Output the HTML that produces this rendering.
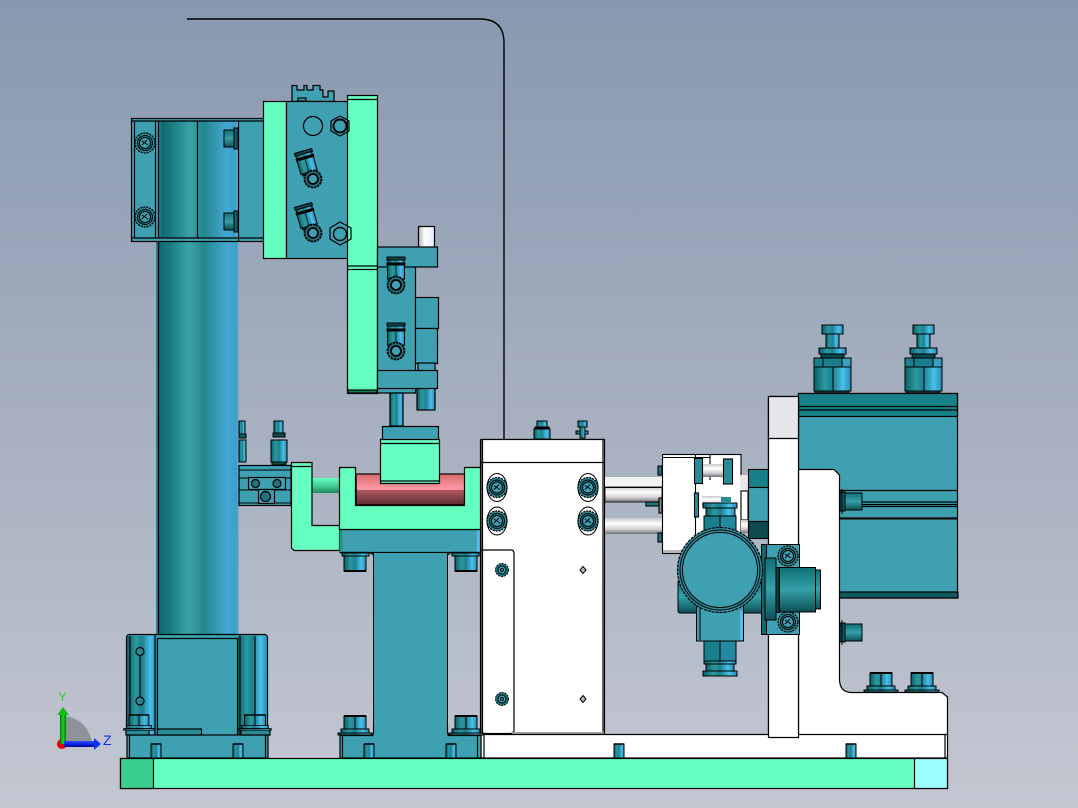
<!DOCTYPE html>
<html><head><meta charset="utf-8"><style>
html,body{margin:0;padding:0;width:1078px;height:808px;overflow:hidden;background:#a4aebd}
svg{display:block}
text{font-family:"Liberation Sans",sans-serif}
</style></head><body>
<svg width="1078" height="808" viewBox="0 0 1078 808" xmlns="http://www.w3.org/2000/svg">
<defs>
<linearGradient id="bg" x1="0" y1="0" x2="0" y2="1"><stop offset="0" stop-color="#8899af"/><stop offset=".5" stop-color="#a5afbf"/><stop offset="1" stop-color="#c4c7d2"/></linearGradient>
<linearGradient id="col" x1="0" y1="0" x2="1" y2="0"><stop offset="0" stop-color="#2f8f96"/><stop offset=".05" stop-color="#0f6a70"/><stop offset=".18" stop-color="#1a7d82"/><stop offset=".4" stop-color="#3aa3a8"/><stop offset=".58" stop-color="#24868e"/><stop offset=".85" stop-color="#43a8d2"/><stop offset=".97" stop-color="#3c9fca"/><stop offset="1" stop-color="#7bb0c6"/></linearGradient>
<linearGradient id="cyl" x1="0" y1="0" x2="1" y2="0"><stop offset="0" stop-color="#0d5f66"/><stop offset=".3" stop-color="#2c9aa0"/><stop offset=".5" stop-color="#1c7f90"/><stop offset=".78" stop-color="#4ac0ea"/><stop offset="1" stop-color="#2a88b0"/></linearGradient>
<linearGradient id="vc" x1="0" y1="0" x2="0" y2="1"><stop offset="0" stop-color="#0e6f74"/><stop offset=".5" stop-color="#35a0a8"/><stop offset="1" stop-color="#0c4f55"/></linearGradient>
<linearGradient id="rod" x1="0" y1="0" x2="0" y2="1"><stop offset="0" stop-color="#c8c8cc"/><stop offset=".35" stop-color="#fff"/><stop offset=".7" stop-color="#d0d0d4"/><stop offset="1" stop-color="#707074"/></linearGradient>
<linearGradient id="pin" x1="0" y1="0" x2="1" y2="0"><stop offset="0" stop-color="#b0b0b8"/><stop offset=".4" stop-color="#fff"/><stop offset="1" stop-color="#e8e8ff"/></linearGradient>
<linearGradient id="red" x1="0" y1="0" x2="0" y2="1"><stop offset="0" stop-color="#d96b6b"/><stop offset=".5" stop-color="#ff9aa8"/><stop offset=".52" stop-color="#b05a60"/><stop offset="1" stop-color="#5c2a30"/></linearGradient>
<linearGradient id="grod" x1="0" y1="0" x2="0" y2="1"><stop offset="0" stop-color="#66ffc2"/><stop offset=".5" stop-color="#45d094"/><stop offset="1" stop-color="#1f8a60"/></linearGradient>
<linearGradient id="ax" x1="0" y1="0" x2="1" y2="0"><stop offset="0" stop-color="#0a6a0a"/><stop offset=".5" stop-color="#10e010"/><stop offset="1" stop-color="#0a7a0a"/></linearGradient>
<linearGradient id="az" x1="0" y1="0" x2="0" y2="1"><stop offset="0" stop-color="#2a50ff"/><stop offset=".6" stop-color="#0a1ee0"/><stop offset="1" stop-color="#000a80"/></linearGradient>

<g id="bigbolt" stroke="#000" stroke-width="1">
<rect x="-10" y="0" width="21" height="9" fill="url(#cyl)"/>
<rect x="-6" y="9" width="13" height="14" fill="url(#cyl)"/>
<rect x="-13" y="23" width="27" height="6" fill="url(#cyl)"/>
<rect x="-11" y="29" width="23" height="4" fill="#0b4a50"/>
<rect x="-18" y="33" width="37" height="9" fill="#1a7f8c"/>
<path d="M-9 33v9M10 33v9" fill="none"/><rect x="10" y="33" width="9" height="9" fill="#3aa0c0"/>
<rect x="-18" y="42" width="37" height="24" fill="url(#cyl)"/>
<path d="M1 42v24" fill="none"/><rect x="-17" y="66" width="34" height="2" fill="#0b4a50"/>
</g>
<g id="footbolt" stroke="#000" stroke-width="1">
<rect x="-11" y="0" width="22" height="13" fill="url(#cyl)" stroke-width="1"/><path d="M-11 0h22" stroke-width="2"/>
<path d="M0 0v19" />
<rect x="-14" y="13" width="28" height="4" fill="url(#cyl)"/>
<rect x="-17" y="17" width="34" height="2" fill="url(#cyl)"/>
</g>
<g id="hexscrew">
<circle r="10" fill="#2a8b97" stroke="#000" stroke-width="1.3" stroke-dasharray="2 1"/>
<circle r="7.500" fill="#1c7580" stroke="#000" stroke-width="1"/>
<circle r="5.500" fill="#3fa0b2" stroke="#000" stroke-width="1"/>
<path d="M-3 -2L3 2M-3 2L2 -3" stroke="#000" stroke-width="1" fill="none"/>
</g>
<g id="wscrew">
<ellipse rx="10" ry="14" fill="#fff" stroke="#000" stroke-width="1"/>
<use href="#hexscrew"/>
</g>
<g id="ring" fill="none" stroke="#000">
<circle r="8.500" fill="#1c7580" stroke-width="1.800" stroke-dasharray="2.500 .8"/>
<circle r="5" fill="#3fa0b2" stroke-width="1.800"/>
</g>
<g id="ptfit" stroke="#000" stroke-width="1">
<rect x="-9" y="0" width="18" height="3" fill="#0b4a50"/>
<rect x="-8" y="3" width="16" height="3" fill="url(#cyl)"/>
<rect x="-9" y="6" width="18" height="2" fill="#000"/>
<rect x="-8.500" y="8" width="17" height="14" fill="url(#cyl)"/>
<path d="M0 8v14" stroke-width=".6"/>
<rect x="-7" y="22" width="14" height="2" fill="#0b4a50"/>
</g>
<g id="stud" stroke="#000" stroke-width="1">
<rect x="-5" y="0" width="10" height="14" fill="url(#cyl)"/>
<path d="M-5 0h10" stroke-width="1.500"/>
</g>
<g id="sidebolt" stroke="#000" stroke-width="1">
<rect x="0" y="3" width="5" height="19" fill="#0d5f66"/>
<rect x="5" y="4" width="17" height="17" fill="url(#vc)"/>
<path d="M2 0v25"/>
</g>
<g id="tinyscrew">
<circle r="6.500" fill="#1c7580" stroke="#000" stroke-width="1" stroke-dasharray="2 1"/>
<circle r="4" fill="#3fa0b2" stroke="#000" stroke-width="1"/>
<circle r="1.600" fill="#1c7580" stroke="#000" stroke-width=".7"/>
</g>
</defs>

<rect width="1078" height="808" fill="url(#bg)"/>

<!-- wire -->
<path d="M187 19H480Q504 19 504 43V439" fill="none" stroke="#000" stroke-width="1.400"/>

<!-- column -->
<rect x="156" y="120" width="83" height="516" fill="url(#col)"/>
<path d="M158.500 120V636" stroke="#000" stroke-width="1.300"/>

<!-- top clamp -->
<g stroke="#000" stroke-width="1.200">
<rect x="131.500" y="118.500" width="133" height="123" fill="#3fa0b2"/>
<rect x="158" y="121" width="80" height="117" fill="url(#col)" stroke="none"/>
<path d="M131.500 121H264M131.500 238H264M134.500 121V238M155.500 121V238M158.500 121V238M197.500 121V238M238.500 121V242" fill="none"/>
</g>
<use href="#hexscrew" x="145" y="143"/>
<use href="#hexscrew" x="145" y="217"/>
<g stroke="#000" stroke-width="1">
<rect x="224" y="130" width="12" height="17" fill="url(#vc)"/><rect x="234" y="128" width="4" height="21" fill="#0d5f66"/>
<rect x="224" y="213" width="12" height="17" fill="url(#vc)"/><rect x="234" y="211" width="4" height="21" fill="#0d5f66"/>
</g>

<!-- block on top -->
<g stroke="#000" stroke-width="1.200">
<rect x="263.500" y="101.500" width="23" height="157" fill="#66ffc2"/>
<path d="M292 101.500V85.500H297V90H304V85.500H307V90H313V85.500H320V90H323V97H328V91H334V101.500Z" fill="#3fa0b2"/>
<rect x="298" y="98" width="8" height="3" fill="#3fa0b2"/>
<rect x="286.500" y="101.500" width="65" height="157" fill="#3fa0b2"/>
<rect x="351.500" y="104" width="2" height="153" fill="#3fa0b2"/>
<rect x="347.500" y="95.500" width="30" height="298" fill="#66ffc2"/>
<path d="M347.500 99.500H377M347.500 266H377M347.500 269.500H377" fill="none"/>
<rect x="348" y="390" width="29" height="3" fill="#1a7a55"/>
</g>
<circle cx="313" cy="126" r="9.500" fill="none" stroke="#000" stroke-width="1.200"/>
<path d="M340 116L349 121V131L340 136L331 131V121Z" fill="none" stroke="#000" stroke-width="1.200"/>
<circle cx="340" cy="126" r="6.500" fill="none" stroke="#000" stroke-width="2"/>
<path d="M340 222L351 228V239L340 245L330 239V228Z" fill="none" stroke="#000" stroke-width="1.200"/>
<circle cx="340" cy="234" r="6.500" fill="none" stroke="#000" stroke-width="1.400"/>
<use href="#ptfit" transform="translate(303,151) rotate(-16)"/>
<use href="#ptfit" transform="translate(303,205) rotate(-16)"/>
<use href="#ring" x="313" y="179"/>
<use href="#ring" x="313" y="233"/>

<!-- lower slide assembly -->
<g stroke="#000" stroke-width="1.200">
<rect x="377.500" y="260" width="38" height="133" fill="#3fa0b2"/>
<rect x="415.500" y="297.500" width="23" height="31" fill="#3fa0b2"/>
<rect x="415.500" y="328.500" width="22" height="35" fill="#3fa0b2"/>
<rect x="418" y="363" width="17" height="8" fill="#3fa0b2"/>
<rect x="418.500" y="226.500" width="16" height="21" fill="url(#pin)"/>
<rect x="377.500" y="247" width="60" height="20" fill="#3fa0b2"/>
<rect x="390" y="393" width="13" height="33" fill="url(#cyl)"/>
<rect x="417" y="388" width="18" height="22" fill="url(#cyl)"/>
<rect x="377.500" y="370.500" width="60" height="18" fill="#3fa0b2"/>
</g>
<use href="#ptfit" x="396" y="257"/>
<use href="#ptfit" x="396" y="323"/>
<use href="#ring" x="396" y="285"/>
<use href="#ring" x="396" y="351"/>

<!-- left small part with fittings -->
<g stroke="#000" stroke-width="1.200">
<rect x="239" y="465.500" width="52" height="40" fill="#3fa0b2" stroke-width="1.200"/>
<path d="M239 470H291M239 478H291M239 490H291M239 503H291" fill="none" stroke-width="1"/>
<rect x="248.500" y="477.500" width="37" height="12" fill="#3fa0b2"/>
<rect x="258.500" y="489.500" width="16" height="14" fill="#3fa0b2"/>
<circle cx="255.500" cy="483.500" r="4" fill="#1c7580"/>
<circle cx="277" cy="483.500" r="4" fill="#1c7580"/>
<circle cx="265.500" cy="496.500" r="5" fill="#1c7580"/>
</g>
<g stroke="#000" stroke-width="1">
<rect x="239" y="421" width="6" height="13" fill="url(#cyl)"/><rect x="239" y="434" width="7" height="4" fill="#0d5f66"/>
<rect x="239" y="440" width="7" height="22" fill="url(#cyl)"/>
<rect x="274" y="421" width="9" height="12" fill="url(#cyl)"/><rect x="273" y="433" width="12" height="4" fill="#0b4a50"/>
<rect x="271" y="440" width="16" height="22" fill="url(#cyl)"/><rect x="272" y="462" width="14" height="3" fill="#0b4a50"/>
</g>

<!-- green holder -->
<rect x="312" y="478" width="28" height="15" fill="url(#grod)"/>
<g stroke="#000" stroke-width="1.200">
<path d="M291.500 462.500H312V525.500H339.500V550.500H294L291.500 548Z" fill="#66ffc2"/>
<path d="M291.500 466.500H312" fill="none"/>
<rect x="356" y="474" width="110" height="31" fill="url(#red)"/>
<path d="M356 479V505H466V476" fill="none" stroke-width="1.400"/>
<rect x="340" y="529.500" width="140" height="23" fill="#3fa0b2"/>
<rect x="339.500" y="529" width="3" height="23" fill="#1f9a78" stroke="none"/>
<rect x="477" y="529" width="3" height="23" fill="#5ab8ec" stroke="none"/>
<path d="M339.500 467.500H355.500V505.500H464.500V467.500H481V529.500H339.500Z" fill="#66ffc2"/>
<rect x="382.500" y="426.500" width="56" height="14" fill="#3fa0b2"/>
<rect x="380.500" y="439.500" width="59" height="44" fill="#66ffc2"/>
<path d="M380.500 443.500H439.500M381 481H439" fill="none"/>
<!-- pedestal -->
<path d="M373.500 552.500V735H447.500V552.500Z" fill="#3fa0b2" stroke-width="1"/>
<path d="M340 552.500H370L373.500 555M447.500 555L451 552.500H480" fill="none"/>
</g>
<g stroke="#000" stroke-width="1">
<rect x="344" y="556" width="22" height="15" fill="url(#cyl)"/><path d="M344 571h22" stroke-width="2"/>
<rect x="342" y="553" width="27" height="3" fill="url(#cyl)"/>
<rect x="455" y="556" width="22" height="15" fill="url(#cyl)"/><path d="M455 571h22" stroke-width="2"/>
<rect x="452" y="553" width="27" height="3" fill="url(#cyl)"/>
</g>

<!-- white block -->
<g stroke="#000" stroke-width="1.200">
<rect x="481" y="439.500" width="123.500" height="294" fill="#fff"/>
<rect x="482.500" y="439.500" width="120.500" height="294" fill="#fff"/>
<path d="M481 462.500H604M481 550H511Q514 550 514 554V731L512 733" fill="none"/>
<path d="M480.500 439.500V735" fill="none"/>
<rect x="512" y="732" width="92" height="2" fill="#a0a0a0" stroke="none"/>
</g>
<use href="#wscrew" x="497" y="487.500"/>
<use href="#wscrew" x="497" y="521"/>
<use href="#wscrew" x="588" y="487.500"/>
<use href="#wscrew" x="588" y="521"/>
<use href="#tinyscrew" x="502" y="570"/>
<use href="#tinyscrew" x="502" y="699"/>
<path d="M583 566.500L586 570L583 573.500L580 570Z" fill="#bbb" stroke="#000"/>
<path d="M583 695.500L586 699L583 702.500L580 699Z" fill="#bbb" stroke="#000"/>
<g stroke="#000" stroke-width="1">
<rect x="537" y="421" width="10" height="6" fill="url(#cyl)"/><rect x="534" y="429" width="16" height="10" fill="url(#cyl)"/><rect x="535" y="427" width="14" height="2" fill="#000"/>
<rect x="578" y="421" width="9" height="6" fill="url(#cyl)"/><rect x="576" y="431" width="12" height="3" fill="url(#cyl)"/><rect x="580" y="427" width="5" height="11" fill="url(#cyl)"/>
</g>

<!-- rods -->
<rect x="605" y="477" width="57" height="10" fill="#f2f2f4"/>
<rect x="605" y="487" width="57" height="15" fill="url(#rod)" stroke="#000" stroke-width=".8"/>
<rect x="605" y="518" width="57" height="16" fill="url(#rod)"/>
<path d="M605 487.500H662" stroke="#000"/>

<!-- white mid blocks -->
<g stroke="#000" stroke-width="1.100">
<rect x="695" y="454.500" width="46" height="99" fill="#fff"/>
<rect x="662.500" y="454.500" width="33" height="99" fill="#fff"/>
<path d="M662.500 457.500H710M710 454.500V480" fill="none"/>
<rect x="663" y="550" width="33" height="3" fill="#b8b8b8" stroke="none"/>
<rect x="702" y="464" width="22" height="13" fill="url(#rod)" stroke="none"/>
<rect x="694.500" y="458.500" width="8" height="25" fill="#2a8b97"/>
<rect x="723.500" y="459" width="9" height="25" fill="#2a8b97"/>
<rect x="702" y="496" width="20" height="10" fill="url(#rod)" stroke="none"/>
<rect x="694.500" y="493" width="4" height="24" fill="#2a8b97"/>
<rect x="658" y="466" width="4" height="9" fill="#1c7580"/>
<rect x="646" y="502" width="15" height="4" fill="#1c7580"/>
<rect x="659" y="498" width="3" height="15" fill="#888"/>
<rect x="658" y="533" width="4" height="9" fill="#1c7580"/>
<rect x="740" y="475" width="8" height="16" fill="#e8e8ea" stroke="none"/>
<rect x="741" y="491" width="7" height="29" fill="#fff"/>
<rect x="741" y="520" width="7" height="13" fill="url(#rod)" stroke="none"/>
<rect x="748.500" y="469.500" width="20" height="18" fill="#178088"/>
<rect x="748.500" y="487.500" width="20" height="34" fill="#3fa0b2"/>
<rect x="748.500" y="521.500" width="20" height="17" fill="#0c4a50"/>
</g>

<!-- cylinder -->
<g stroke="#000" stroke-width="1.200">
<rect x="768.500" y="396.500" width="30" height="341" fill="#fff"/>
<rect x="769" y="397" width="29" height="41" fill="#e4e6ea" stroke="none"/>
<path d="M768.500 438.500H798.500" fill="none"/>
<rect x="798.500" y="393.500" width="159" height="204.500" fill="#3fa0b2"/>
<rect x="798.500" y="393.500" width="159" height="23" fill="#178088"/>
<path d="M798.500 406.500H958M798.500 410H958" fill="none"/>
<rect x="839" y="592" width="119" height="6" fill="#0f5a60"/>
<path d="M839 490.500H958M860 502H958M860 504.500H958M839 506.500H958M839 518H958" fill="none"/>
<path d="M839 518.500H958" stroke-width="2"/>
<path d="M798.500 469.500H834L839.500 475V680Q840 692 851 692.500H942L947.500 697V735.500H798.500Z" fill="#fff"/>
<path d="M481 734.500H768.500M798.500 734.500H947.500V758H481V734.500Z" fill="#fff"/>
<path d="M484 735V758M945 735V758" fill="none"/>
<path d="M768.500 396.500V737.500H798.500V396.500" fill="#fff"/>
<rect x="769" y="397" width="29" height="41" fill="#e4e6ea" stroke="none"/>
<path d="M768.500 438.500H798.500M768.500 396.500H798.500M768.500 396.500V439M798.500 396.500V439" fill="none"/>
</g>
<use href="#bigbolt" x="832" y="325"/>
<use href="#bigbolt" x="923" y="325"/>
<use href="#sidebolt" x="840" y="489"/>
<use href="#sidebolt" x="840" y="620"/>
<use href="#footbolt" x="881" y="673"/>
<use href="#footbolt" x="922" y="673"/>
<use href="#stud" x="619" y="744"/>
<use href="#stud" x="851" y="744"/>

<!-- valve -->
<g stroke="#000" stroke-width="1">
<rect x="703" y="503" width="34" height="5" fill="url(#cyl)"/>
<rect x="721" y="497" width="10" height="6" fill="#2a8b97" stroke="none"/>
<rect x="706" y="508" width="29" height="8" fill="url(#cyl)"/>
<rect x="704" y="516" width="32" height="16" fill="#1a7f8c"/><rect x="720" y="516" width="16" height="16" fill="#2488a0"/>
<rect x="678" y="580" width="85" height="33" rx="2" fill="url(#vc)"/>
<rect x="696.500" y="606" width="47" height="35" fill="#3fa0b2"/>
<rect x="740" y="611" width="3" height="29" fill="#5ab8ec" stroke="none"/>
<path d="M700 606V640" fill="none"/>
<rect x="704" y="641" width="32" height="20" fill="#1a7f8c"/><rect x="720" y="641" width="16" height="20" fill="#2488a0"/>
<rect x="704" y="661" width="32" height="3" fill="url(#cyl)"/>
<rect x="706" y="664" width="28" height="7" fill="url(#cyl)"/>
<rect x="703" y="671" width="34" height="5" fill="url(#cyl)"/>
<rect x="761.500" y="544.500" width="38" height="90" fill="#3fa0b2"/>
<rect x="761.500" y="544.500" width="5" height="90" fill="#0f6a70"/>
<rect x="765" y="558" width="11" height="62" fill="url(#vc)"/>
<rect x="776" y="567.500" width="3" height="45" fill="#0c4a50"/>
<rect x="779.500" y="567.500" width="36" height="44.500" fill="url(#vc)"/>
<rect x="815.500" y="570" width="5" height="39" fill="url(#vc)"/>
</g>
<circle cx="720" cy="570" r="42.500" fill="#2f8f9e" stroke="#000" stroke-width="1.200" stroke-dasharray="3 1"/>
<circle cx="720" cy="570" r="40" fill="#2f8f9e" stroke="#000" stroke-width="1"/>
<circle cx="720" cy="570" r="37.500" fill="#3fa0b2" stroke="#000" stroke-width="1"/>
<use href="#hexscrew" x="788" y="556"/>
<use href="#hexscrew" x="788" y="622"/>

<!-- bottom-left clamp -->
<g stroke="#000" stroke-width="1.200">
<rect x="126.500" y="634.500" width="141" height="101" rx="3" fill="#3fa0b2"/>
<rect x="127" y="636" width="30" height="99" fill="url(#cyl)" stroke="none"/>
<rect x="238" y="636" width="29" height="99" fill="url(#cyl)" stroke="none"/>
<path d="M157.500 638.500H237.500V735M157.500 638.500V735M155 634.500V735M240 634.500V735M255 636V735M130 636V735" fill="none"/>
<rect x="127" y="735" width="141" height="23" fill="#3fa0b2"/>
<path d="M129.500 735V758M265.500 735V758" fill="none"/>
<rect x="126" y="729" width="23" height="6" fill="#2a8b97"/>
<rect x="157.500" y="729" width="44" height="6" fill="#2a8b97"/>
<rect x="241" y="729" width="29" height="6" fill="#2a8b97"/>
<circle cx="140" cy="651.500" r="4" fill="none"/>
<circle cx="140" cy="701" r="4" fill="none"/>
<path d="M140 655.500V697" fill="none"/>
</g>
<use href="#footbolt" transform="translate(139,715) scale(.9,.8)"/>
<use href="#footbolt" transform="translate(255,715) scale(.95,.8)"/>
<use href="#stud" x="156" y="744"/>
<use href="#stud" x="238" y="744"/>

<!-- pedestal flange -->
<g stroke="#000" stroke-width="1.200">
<rect x="340" y="735.500" width="141" height="22.500" fill="#3fa0b2"/>
<path d="M342.500 735.500V758M477.500 735.500V758" fill="none"/>
<rect x="373.500" y="725" width="74" height="12" fill="#3fa0b2" stroke="none"/>
<path d="M373.500 725V731Q374 735.500 370 735.500M447.500 725V731Q447 735.500 451 735.500" fill="none"/>
</g>
<use href="#footbolt" x="355" y="716"/>
<use href="#footbolt" x="466" y="716"/>
<use href="#stud" x="369" y="744"/>
<use href="#stud" x="451" y="744"/>

<!-- base plate -->
<g stroke="#000" stroke-width="1.200">
<rect x="120.500" y="758.500" width="827" height="30" fill="#66ffc2"/>
<rect x="120.500" y="758.500" width="33" height="30" fill="#3acf8f"/>
<rect x="914.500" y="758.500" width="33" height="30" fill="#99ffff"/>
</g>

<!-- triad -->
<path d="M62 745V716A30 30 0 0 1 92 745Z" fill="#8e929b"/>
<circle cx="62" cy="744" r="5" fill="#f00000"/>
<rect x="60" y="714" width="6" height="30" fill="url(#ax)"/>
<path d="M63 707L69 715H57Z" fill="#10c010"/>
<rect x="64" y="741" width="32" height="6" fill="url(#az)"/>
<path d="M101 744L94 738V750Z" fill="#1030f0"/>
<text x="58.500" y="701" font-size="12" fill="#20d020">Y</text>
<text x="103" y="745" font-size="14" fill="#1030f0">Z</text>
</svg>
</body></html>
